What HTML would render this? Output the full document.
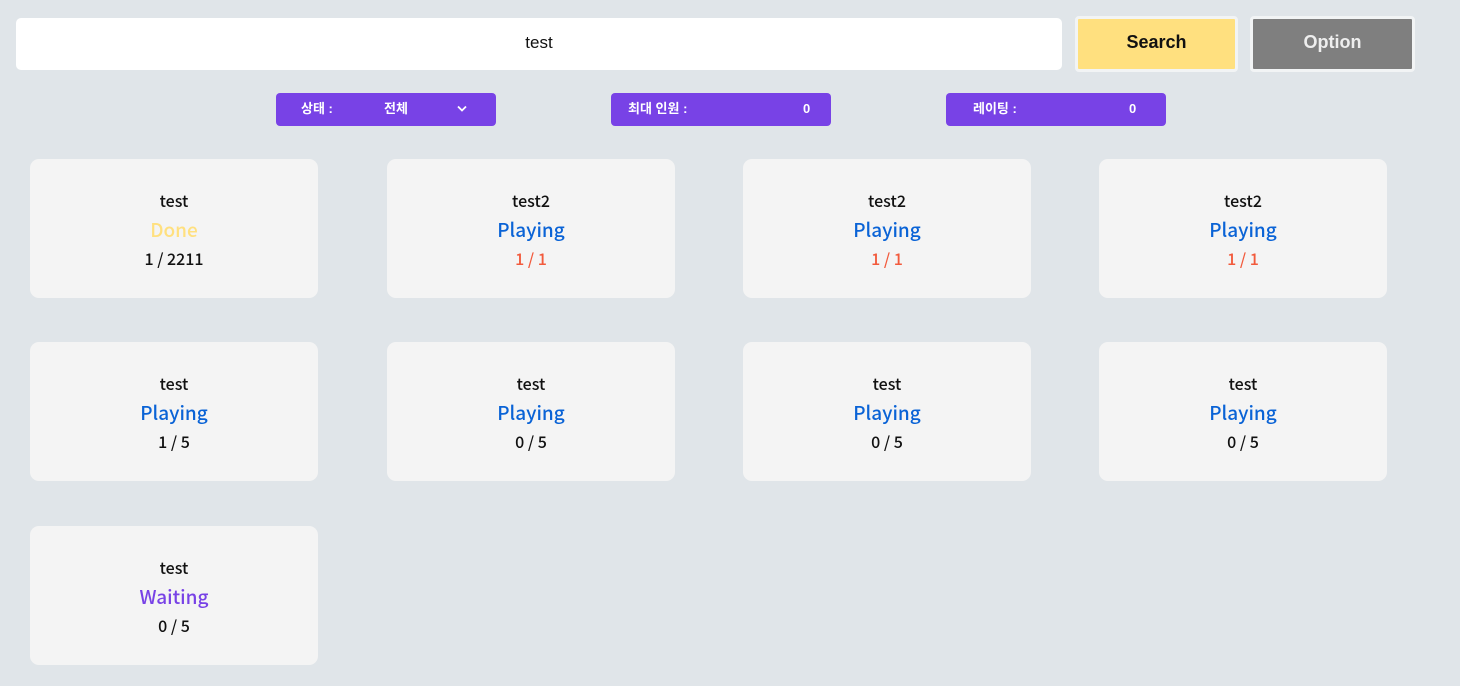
<!DOCTYPE html>
<html><head><meta charset="utf-8"><style>
body{margin:0;width:1460px;height:686px;background:#e0e5e9;font-family:"Liberation Sans","Noto Sans CJK KR",sans-serif;position:relative;overflow:hidden}
.abs{position:absolute}
.inp{left:16px;top:18px;width:1046px;height:52px;background:#fff;border-radius:5px;text-align:center;line-height:50px;font-size:17px;color:#111}
.btn{top:16px;height:50px;border:3px solid #f2f4f5;border-radius:4px;text-align:center;line-height:46px;font-weight:bold;font-size:18px}
.pill{top:93px;width:220px;height:33px;background:#7842e6;border-radius:4px;color:#fff;font-size:13px;font-weight:bold;line-height:31px}
.card{width:288px;height:139px;background:#f4f4f4;border-radius:9px;text-align:center;font-family:"Noto Sans CJK KR","Liberation Sans",sans-serif;font-weight:500}
.t{position:absolute;left:0;right:0;top:30px;font-size:16px;color:#111;line-height:22px}
.s{position:absolute;left:0;right:0;top:58px;font-size:19px;line-height:26px}
.c{position:absolute;left:0;right:0;top:88px;font-size:16px;line-height:22px;color:#111}
</style></head><body>
<div class="abs inp">test</div>
<div class="abs btn" style="left:1075px;width:157px;background:#ffe07f;color:#111">Search</div>
<div class="abs btn" style="left:1250px;width:159px;background:#7f7f7f;color:#eee">Option</div>
<div class="abs pill" style="left:276px"><span class="abs" style="left:25px">상태 :</span><span class="abs" style="left:108px">전체</span><svg class="abs" style="left:181px;top:12px" width="10" height="7" viewBox="0 0 10 7"><path d="M1 1.5L5 5.5L9 1.5" stroke="#fff" stroke-width="1.8" fill="none"/></svg></div>
<div class="abs pill" style="left:611px"><span class="abs" style="left:17px">최대 인원 :</span><span class="abs" style="left:192px">0</span></div>
<div class="abs pill" style="left:946px"><span class="abs" style="left:27px">레이팅 :</span><span class="abs" style="left:183px">0</span></div>

<div class="abs card" style="left:30px;top:159px"><div class="t">test</div><div class="s" style="color:#ffe07f">Done</div><div class="c">1 / 2211</div></div>
<div class="abs card" style="left:387px;top:159px"><div class="t">test2</div><div class="s" style="color:#0a63d6">Playing</div><div class="c" style="color:#f25a3c">1 / 1</div></div>
<div class="abs card" style="left:743px;top:159px"><div class="t">test2</div><div class="s" style="color:#0a63d6">Playing</div><div class="c" style="color:#f25a3c">1 / 1</div></div>
<div class="abs card" style="left:1099px;top:159px"><div class="t">test2</div><div class="s" style="color:#0a63d6">Playing</div><div class="c" style="color:#f25a3c">1 / 1</div></div>

<div class="abs card" style="left:30px;top:342px"><div class="t">test</div><div class="s" style="color:#0a63d6">Playing</div><div class="c">1 / 5</div></div>
<div class="abs card" style="left:387px;top:342px"><div class="t">test</div><div class="s" style="color:#0a63d6">Playing</div><div class="c">0 / 5</div></div>
<div class="abs card" style="left:743px;top:342px"><div class="t">test</div><div class="s" style="color:#0a63d6">Playing</div><div class="c">0 / 5</div></div>
<div class="abs card" style="left:1099px;top:342px"><div class="t">test</div><div class="s" style="color:#0a63d6">Playing</div><div class="c">0 / 5</div></div>

<div class="abs card" style="left:30px;top:526px"><div class="t">test</div><div class="s" style="color:#7842e6">Waiting</div><div class="c">0 / 5</div></div>
</body></html>
